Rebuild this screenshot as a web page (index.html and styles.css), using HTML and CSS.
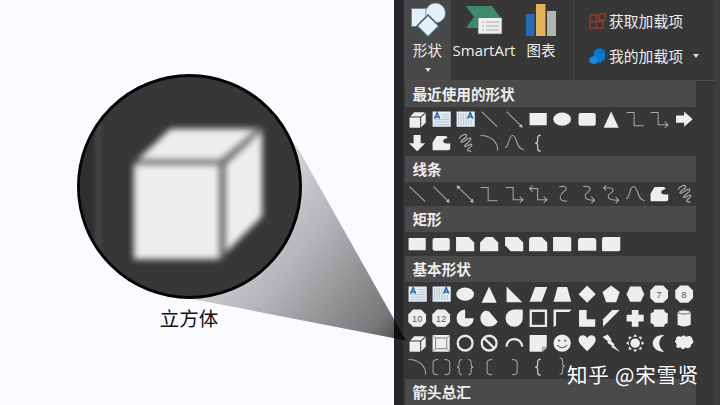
FILE: index.html
```html
<!DOCTYPE html>
<html lang="zh-CN">
<head>
<meta charset="utf-8">
<title>立方体</title>
<link rel="stylesheet" href="styles.css">
</head>
<body>
<svg class="defs" aria-hidden="true">
  <symbol id="cube" viewBox="0 0 24 24"><path class="f" d="M4.500 10.500H15v10H4.500zM5.200 9.500L9 5.300h10.800l-4.300 4.200zM16 10.300l4.500-4.300v9.500L16 20z"/></symbol>
  <symbol id="text-h" viewBox="0 0 24 24"><path fill="#e5edf5" d="M3.500 4.500h18v15h-18z"/><path stroke="#a8b8c8" stroke-width=".8" d="M13 7.500h7M13 10h7M5 12.500h15M5 15h15M5 17.500h15"/><path fill="none" stroke="#286ba8" stroke-width="1.500" d="M5.500 11.500L8 5.500l2.500 6M6.500 9.800h3"/></symbol>
  <symbol id="text-v" viewBox="0 0 24 24"><path fill="#e5edf5" d="M3.500 4.500h18v15h-18z"/><path stroke="#a8b8c8" stroke-width=".8" d="M5.500 6v12M8 6v12M10.500 6v12M13 6v12M15.500 13v5M18 13v5"/><path fill="none" stroke="#286ba8" stroke-width="1.500" d="M14.500 11.500l2.500-6 2.500 6M15.500 9.800h3"/></symbol>
  <symbol id="line" viewBox="0 0 24 24"><path class="s" d="M4.500 4.500l15.500 15"/></symbol>
  <symbol id="arrow" viewBox="0 0 24 24"><path class="s" d="M4.500 4.500l14.500 14.500"/><path class="f dim" d="M20.500 20.500l-4-1 3-3z"/></symbol>
  <symbol id="arrow2" viewBox="0 0 24 24"><path class="s" d="M5 5l14.500 14"/><path class="f dim" d="M20.500 20.500l-4-1 3-3zM3.500 3.500l4 1-3 3z"/></symbol>
  <symbol id="rect" viewBox="0 0 24 24"><path class="f" d="M3.500 6h17v12h-17z"/></symbol>
  <symbol id="rrect" viewBox="0 0 24 24"><rect class="f" x="3.500" y="6" width="17" height="12.500" rx="2"/></symbol>
  <symbol id="oval" viewBox="0 0 24 24"><ellipse class="f" cx="12" cy="12" rx="8.700" ry="6.500"/></symbol>
  <symbol id="tri" viewBox="0 0 24 24"><path class="f" d="M12 4.500l7.500 16h-15z"/></symbol>
  <symbol id="elbow" viewBox="0 0 24 24"><path class="s" d="M3.500 5.500h7.500v13h9.500"/></symbol>
  <symbol id="elbow-a" viewBox="0 0 24 24"><path class="s" d="M3.500 5.500H11V17.500h9M17.500 14.500l3.300 3-3.300 3"/></symbol>
  <symbol id="elbow-2" viewBox="0 0 24 24"><path class="s" d="M4 6.500h7.500v11H20M17.500 14.500l3.300 3-3.300 3M6.500 3.500l-3 3 3 3"/></symbol>
  <symbol id="right" viewBox="0 0 24 24"><path class="f" d="M4 8.500h8V4.500l8.500 7.500-8.500 7.500v-4H4z"/></symbol>
  <symbol id="down" viewBox="0 0 24 24"><path class="f" d="M8.500 4h7v8h4.500L12 20 4 12h4.500z"/></symbol>
  <symbol id="free" viewBox="0 0 24 24"><path class="f" d="M3.500 19V11.500L7.500 5h9.500l1.500 2q-6 1-4 4.500 2 1.500 6.500.500V17q0 2-2 2z"/></symbol>
  <symbol id="scribble" viewBox="0 0 24 24"><path class="s w" d="M6 7.500C8 4 13 2 13.500 4.500S6.500 9 8 11s8-6 9.500-3.500S11 13 11.500 15s6-3.500 7-1.500-5 4-4 5.500 3.500-.5 3 2"/></symbol>
  <symbol id="arc" viewBox="0 0 24 24"><path class="s" d="M3.500 4.500c10 0 17 6 17 15"/></symbol>
  <symbol id="curve" viewBox="0 0 24 24"><path class="s" d="M3 16.500c4 0 3-12 7.500-12S14 18.500 21.500 18.500"/></symbol>
  <symbol id="lbrace" viewBox="0 0 24 24"><path class="s b" d="M14.500 4q-3 0-3 3v3q0 2-2.500 2 2.500 0 2.500 2v3q0 3 3 3"/></symbol>
  <symbol id="rbrace" viewBox="0 0 24 24"><path class="s" d="M9.500 3q3 0 3 3v3q0 2 2.500 2-2.500 0-2.500 2v3q0 3-3 3"/></symbol>
  <symbol id="scurve" viewBox="0 0 24 24"><path class="s" d="M9 5q7-2 7 1.500c0 3-6 4-6 8.500q0 4 7 4"/></symbol>
  <symbol id="scurve-a" viewBox="0 0 24 24"><path class="s" d="M8 4.500q7-1 7 2.500c0 3-5 3-5 7q0 4 9 4M16 14.500l3.500 3.500-3.500 3"/></symbol>
  <symbol id="scurve-2" viewBox="0 0 24 24"><path class="s" d="M5 6q9-1 9 2c0 3-5 3-5 6q0 4 10 4M16.500 15l3 3-3 3M7 3L4.500 6 7 8.500"/></symbol>
  <symbol id="snip1" viewBox="0 0 24 24"><path class="f" d="M3 5h12.500l5.500 5.500V19H3z"/></symbol>
  <symbol id="snip2" viewBox="0 0 24 24"><path class="f" d="M3 10.500L8.500 5h7l5.500 5.500V19H3z"/></symbol>
  <symbol id="snipd" viewBox="0 0 24 24"><path class="f" d="M3 5h12.500l5.500 5.500V19H8.500L3 13z"/></symbol>
  <symbol id="snipr" viewBox="0 0 24 24"><path class="f" d="M3 7.500Q3 5 6 5h9.500l5.500 5.500V19H3z"/></symbol>
  <symbol id="round1" viewBox="0 0 24 24"><path class="f" d="M3 5h16q2 0 2 2v12H3z"/></symbol>
  <symbol id="round2" viewBox="0 0 24 24"><path class="f" d="M3 8.500Q3 6 5.500 6h13Q21 6 21 8.500v10H3z"/></symbol>
  <symbol id="roundd" viewBox="0 0 24 24"><path class="f" d="M3 7q0-2 2-2h16v12q0 2-2 2H3z"/></symbol>
  <symbol id="rtri" viewBox="0 0 24 24"><path class="f" d="M4.500 4.500l15.500 15.500H4.500z"/></symbol>
  <symbol id="para" viewBox="0 0 24 24"><path class="f" d="M9 5h12l-5.500 14.500h-12z"/></symbol>
  <symbol id="trap" viewBox="0 0 24 24"><path class="f" d="M7.500 5h9.500l4 14.500H3.500z"/></symbol>
  <symbol id="diamond" viewBox="0 0 24 24"><path class="f" d="M12 3.500l8.500 8.500-8.500 8.500L3.500 12z"/></symbol>
  <symbol id="penta" viewBox="0 0 24 24"><path class="f" d="M12 3.500l8.500 6.500-3.500 10H7L3.500 10z"/></symbol>
  <symbol id="hexa" viewBox="0 0 24 24"><path class="f" d="M7 4.500h10.500l3.500 7.500-3.500 7.500H7L3.500 12z"/></symbol>
  <symbol id="poly" viewBox="0 0 24 24"><path class="f" d="M8 3.500h8l4.800 4.800v7.500L16 20.500H8l-4.800-4.700V8.300z"/></symbol>
  <symbol id="pie" viewBox="0 0 24 24"><path class="f" d="M12 3.500A8.500 8.500 0 1 0 20.500 12H12z"/></symbol>
  <symbol id="chord" viewBox="0 0 24 24"><path class="f" d="M8 4.500A8.300 8.300 0 0 0 12 20.300q5.500 0 8.500-4.800L12 5.500z"/></symbol>
  <symbol id="tear" viewBox="0 0 24 24"><path class="f" d="M20.500 3.500V12A8.500 8.500 0 1 1 12 3.500z"/></symbol>
  <symbol id="frame" viewBox="0 0 24 24"><path class="o" d="M4.700 4.700h15v15h-15z"/></symbol>
  <symbol id="half" viewBox="0 0 24 24"><path class="f" d="M3.500 3.500h18L19 6H6v13l-2.500 2z"/></symbol>
  <symbol id="lshape" viewBox="0 0 24 24"><path class="f" d="M4 4h7.500v9H20v7.500H4z"/></symbol>
  <symbol id="stripe" viewBox="0 0 24 24"><path class="f" d="M13 4h7.500L4 20.500V13z"/></symbol>
  <symbol id="plus" viewBox="0 0 24 24"><path class="f" d="M8.700 4h6.600v4.700h5.200v6.600h-5.200v5.200H8.700v-5.200H3.500V8.700h5.200z"/></symbol>
  <symbol id="plaque" viewBox="0 0 24 24"><path class="f" d="M7 3.500h10q0 3.500 3.500 3.500v10q-3.500 0-3.500 3.500H7Q7 17 3.500 17V7Q7 7 7 3.500z"/></symbol>
  <symbol id="can" viewBox="0 0 24 24"><path class="f" d="M5.500 6v12.500q6.500 3.500 13 0V6z"/><ellipse cx="12" cy="6" rx="6" ry="2" fill="#eee" stroke="#666"/></symbol>
  <symbol id="bevel" viewBox="0 0 24 24"><path class="f" d="M3.500 4h17v16.500h-17z"/><path fill="none" stroke="#777" stroke-width=".9" d="M6.500 7h11v10.500h-11zM3.500 4l3 3M20.500 4l-3 3M3.500 20.500l3-3M20.500 20.500l-3-3"/></symbol>
  <symbol id="donut" viewBox="0 0 24 24"><circle class="o" cx="12" cy="12" r="7.300"/></symbol>
  <symbol id="no" viewBox="0 0 24 24"><circle class="o" cx="12" cy="12" r="7.300"/><path class="o" d="M7 7l10 10"/></symbol>
  <symbol id="block" viewBox="0 0 24 24"><path class="o" d="M4.500 15.500c.5-10 14.500-10 15.500 0"/></symbol>
  <symbol id="note" viewBox="0 0 24 24"><path class="f" d="M3.500 4h17v12.500l-4 4h-13z"/><path fill="#d8d8d8" stroke="#777" stroke-width=".8" d="M16 20.500l.5-4.500 4 .5z"/></symbol>
  <symbol id="smile" viewBox="0 0 24 24"><circle class="f" cx="12" cy="12" r="8.500"/><path fill="none" stroke="#666" d="M7 14q5 5 10 0"/><circle cx="9" cy="9.500" r="1.200" fill="#777"/><circle cx="15" cy="9.500" r="1.200" fill="#777"/></symbol>
  <symbol id="heart" viewBox="0 0 24 24"><path class="f" d="M12 20C8 16 3.500 12.500 3.500 8.500c0-5 7-6 8.500-1 1.500-5 8.500-4 8.500 1 0 4-4.500 7.500-8.500 11.500z"/></symbol>
  <symbol id="bolt" viewBox="0 0 24 24"><path class="f" d="M3.500 6l5-2.500 4 5-1 .8 4 4-1 .7 6.500 7-9-5.500 1-.8-5-3 1.200-1z"/></symbol>
  <symbol id="sun" viewBox="0 0 24 24"><circle class="f" cx="12" cy="12" r="4.700"/><path class="f" d="M12 3l2 2.700h-4zM12 21l2-2.700h-4zM3 12l2.700-2v4zM21 12l-2.700-2v4zM5.500 5.500l3.400.5L6 8.900zM18.500 5.500l-3.400.5L18 8.900zM5.500 18.500l3.400-.5L6 15.100zM18.500 18.500l-3.400-.5 2.900-2.900z"/></symbol>
  <symbol id="moon" viewBox="0 0 24 24"><path class="f" d="M17 4c-15-1-15 17 0 16.500C10.500 16 10.500 8 17 4z"/></symbol>
  <symbol id="cloud" viewBox="0 0 24 24"><path class="f" d="M4 9c-1-3 3-5 5-3 1-2 4-2 5 0 2-2 6-1 6 2 2 2 1 5-1 5 0 4-4 5-5.500 3-1 2-4 3-5 0C5 18 3 15 5 13c-2-1-3-3-1-4z"/></symbol>
  <symbol id="lbracket" viewBox="0 0 24 24"><path class="s" d="M15 4.500q-5 0-5 3v9q0 3 5 3"/></symbol>
  <symbol id="rbracket" viewBox="0 0 24 24"><path class="s" d="M10 4.500q5 0 5 3v9q0 3-5 3"/></symbol>
  <symbol id="brackets" viewBox="0 0 24 24"><path class="s" d="M9 4.500q-5 0-5 3v9q0 3 5 3M15.500 4.500q5 0 5 3v9q0 3-5 3"/></symbol>
  <symbol id="braces" viewBox="0 0 24 24"><path class="s" d="M9 4.500q-3 0-3 3V10q0 2-2 2 2 0 2 2v2.500q0 3 3 3M15 4.500q3 0 3 3V10q0 2 2 2-2 0-2 2v2.500q0 3-3 3"/></symbol>
</svg>

<main class="stage">
  <section class="callout">
    <div class="lens">
      <svg viewBox="0 0 220 220">
        <path class="lens-edge" d="M-5 0h22v220H-5z" fill="#2f2f31"/>
        <path class="lens-edge" d="M18 44v132" stroke="#484848" stroke-width="5"/>
        <g class="lens-cube">
          <path fill="#eee" d="M54 88h86v95H54zM58 83l33-31h88l-38 31zM146 88l37-34v86l-37 37z"/>
          <path fill="none" stroke="#777" stroke-width="5" d="M55 86h87v97M142 86l40-35"/>
        </g>
      </svg>
    </div>
    <p class="caption">立方体</p>
  </section>

  <section class="app">
    <div class="edge"></div>
    <div class="panel">
      <header class="ribbon">
        <div class="tool shapes">
          <svg width="38" height="40" viewBox="0 0 38 40"><path fill="#e6eff8" stroke="#557b9d" stroke-width=".7" d="M2.500 8.500h19v18h-19z"/><circle cx="26.500" cy="13" r="10" fill="#e6eff8" stroke="#557b9d" stroke-width=".7"/><path fill="#e6eff8" stroke="#3e5970" stroke-width="1.500" d="M19 15L30 26 19 37 8 26z"/></svg>
          <span>形状</span>
          <i class="caret"></i>
        </div>
        <div class="tool smart">
          <svg width="40" height="40" viewBox="0 0 40 40"><path fill="#3e8b6b" d="M2 6h26l8 11-8 11H2l8-11z"/><path fill="#eee" stroke="#555" stroke-width=".7" d="M14 17.500h24v16.500H14z"/><path stroke="#aaa" d="M18 22h2M22 22h13M18 26h2M22 26h13M18 30h2M22 30h13"/></svg>
          <span>SmartArt</span>
        </div>
        <div class="tool chart">
          <svg width="34" height="40" viewBox="0 0 34 40"><path fill="#2869b5" d="M2 14h8.500v22H2z"/><path fill="#e3b25c" d="M12 4h9.500v32H12z"/><path fill="#b1b5ac" d="M23 11h9v25h-9z"/></svg>
          <span>图表</span>
        </div>
        <div class="addins">
          <div class="addin"><svg width="18" height="18" viewBox="0 0 18 18"><path fill="none" stroke="#8f3d2e" stroke-width="1.500" d="M9 3H2v13h13V9M2 9.500h13M8.500 3v13M11 2h6v6h-6z"/></svg><span>获取加载项</span></div>
          <div class="addin"><svg width="18" height="18" viewBox="0 0 18 18"><path fill="#0e77cf" d="M6 3.500L12 1l5 3v8l-5 4-6-3z"/><path fill="#1689e3" d="M1.500 11l4-2 4 2v4.500L6 17.500l-4.500-2z"/><path fill="none" stroke="#0a5ca8" stroke-width=".7" d="M6 3.500l6 2.500 5-2"/></svg><span>我的加载项</span><i class="caret"></i></div>
        </div>
      </header>

      <div class="gallery">
        <h2>最近使用的形状</h2>
        <div class="grid">
          <svg><use href="#cube"/></svg><svg><use href="#text-h"/></svg><svg><use href="#text-v"/></svg><svg><use href="#line"/></svg><svg><use href="#arrow"/></svg><svg><use href="#rect"/></svg><svg><use href="#oval"/></svg><svg><use href="#rrect"/></svg><svg><use href="#tri"/></svg><svg><use href="#elbow"/></svg><svg><use href="#elbow-a"/></svg><svg><use href="#right"/></svg>
          <svg><use href="#down"/></svg><svg><use href="#free"/></svg><svg><use href="#scribble"/></svg><svg><use href="#arc"/></svg><svg><use href="#curve"/></svg><svg><use href="#lbrace"/></svg>
        </div>
        <h2>线条</h2>
        <div class="grid">
          <svg><use href="#line"/></svg><svg><use href="#arrow"/></svg><svg><use href="#arrow2"/></svg><svg><use href="#elbow"/></svg><svg><use href="#elbow-a"/></svg><svg><use href="#elbow-2"/></svg><svg><use href="#scurve"/></svg><svg><use href="#scurve-a"/></svg><svg><use href="#scurve-2"/></svg><svg><use href="#curve"/></svg><svg><use href="#free"/></svg><svg><use href="#scribble"/></svg>
        </div>
        <h2>矩形</h2>
        <div class="grid">
          <svg><use href="#rect"/></svg><svg><use href="#rrect"/></svg><svg><use href="#snip1"/></svg><svg><use href="#snip2"/></svg><svg><use href="#snipd"/></svg><svg><use href="#snipr"/></svg><svg><use href="#round1"/></svg><svg><use href="#round2"/></svg><svg><use href="#roundd"/></svg>
        </div>
        <h2>基本形状</h2>
        <div class="grid">
          <svg><use href="#text-h"/></svg><svg><use href="#text-v"/></svg><svg><use href="#oval"/></svg><svg><use href="#tri"/></svg><svg><use href="#rtri"/></svg><svg><use href="#para"/></svg><svg><use href="#trap"/></svg><svg><use href="#diamond"/></svg><svg><use href="#penta"/></svg><svg><use href="#hexa"/></svg><svg viewBox="0 0 24 24"><use href="#poly"/><text x="12" y="15.500">7</text></svg><svg viewBox="0 0 24 24"><use href="#poly"/><text x="12" y="15.500">8</text></svg>
          <svg viewBox="0 0 24 24"><use href="#poly"/><text x="12" y="15.500">10</text></svg><svg viewBox="0 0 24 24"><use href="#poly"/><text x="12" y="15.500">12</text></svg><svg><use href="#pie"/></svg><svg><use href="#chord"/></svg><svg><use href="#tear"/></svg><svg><use href="#frame"/></svg><svg><use href="#half"/></svg><svg><use href="#lshape"/></svg><svg><use href="#stripe"/></svg><svg><use href="#plus"/></svg><svg><use href="#plaque"/></svg><svg><use href="#can"/></svg>
          <svg><use href="#cube"/></svg><svg><use href="#bevel"/></svg><svg><use href="#donut"/></svg><svg><use href="#no"/></svg><svg><use href="#block"/></svg><svg><use href="#note"/></svg><svg><use href="#smile"/></svg><svg><use href="#heart"/></svg><svg><use href="#bolt"/></svg><svg><use href="#sun"/></svg><svg><use href="#moon"/></svg><svg><use href="#cloud"/></svg>
          <svg><use href="#arc"/></svg><svg><use href="#brackets"/></svg><svg><use href="#braces"/></svg><svg><use href="#lbracket"/></svg><svg><use href="#rbracket"/></svg><svg><use href="#lbrace"/></svg><svg><use href="#rbrace"/></svg>
        </div>
        <h2>箭头总汇</h2>
      </div>
    </div>
  </section>

  <svg class="beam" viewBox="0 0 720 405">
    <defs><linearGradient id="fade" gradientUnits="userSpaceOnUse" x1="230" y1="200" x2="406" y2="341"><stop offset="0" stop-color="#000" stop-opacity=".12"/><stop offset=".4" stop-color="#000" stop-opacity=".28"/><stop offset=".85" stop-color="#000" stop-opacity=".52"/><stop offset="1" stop-color="#000" stop-opacity=".72"/></linearGradient></defs>
    <path fill="url(#fade)" d="M296 145L406 340.500 190 298.500z"/>
  </svg>
  <p class="watermark">知乎 @宋雪贤</p>
</main>
</body>
</html>
```
FILE: styles.css
```css
* { box-sizing: border-box; }

body {
  margin: 0;
  font-family: "Noto Sans CJK SC", sans-serif;
  color: #eee;
}

.defs { position: absolute; width: 0; height: 0; }

.stage {
  position: relative;
  display: flex;
  width: 720px;
  height: 405px;
  overflow: hidden;
  background: #fafaff;
}

.callout {
  width: 393.5px;
  padding: 73.5px 0 0 76.5px;
}

.lens {
  position: relative;
  z-index: 2;
  width: 225px;
  height: 225px;
  border: 3px solid #050507;
  border-radius: 50%;
  overflow: hidden;
  background: #373737;
}

.lens svg { display: block; width: 219px; height: 219px; }
.lens-cube { filter: blur(3px); }
.lens-edge { filter: blur(2px); }

.caption {
  width: 225px;
  margin: 4px 0 0;
  color: #111;
  font-size: 19.5px;
  line-height: 30px;
  text-align: center;
}

.app {
  display: flex;
  flex: 1;
  height: 405px;
  background: #373737;
}

.edge {
  width: 10.5px;
  background: #26272b;
  border-right: 1px solid #303236;
}

.panel {
  flex: 1;
  border-right: 5px solid #3c3c3c;
}

.ribbon {
  display: flex;
  height: 81px;
  border-bottom: 1px solid #4d4d4d;
}

.tool {
  display: flex;
  flex-direction: column;
  align-items: center;
  font-size: 14.5px;
  line-height: 22px;
  white-space: nowrap;
}

.tool svg { display: block; }
.shapes { width: 47px; background: #484848; }
.smart { width: 66px; }
.chart { width: 48px; }
.tool span { margin-top: -1px; }
.smart span { font-family: "Open Sans", sans-serif; font-size: 15px; }

.caret {
  border: 3px solid transparent;
  border-top: 4px solid #ddd;
  border-bottom: 0;
}

.shapes .caret { margin-top: 7px; }

.addins {
  flex: 1;
  margin-left: 8px;
  padding: 9px 0 0 14px;
  border-left: 1px solid #484848;
}

.addin {
  display: flex;
  align-items: center;
  gap: 3px;
  height: 24px;
  margin-bottom: 11px;
  font-size: 14.8px;
  line-height: 24px;
  white-space: nowrap;
}

.addin .caret { margin-left: 7px; }

.gallery { width: 291.5px; padding-left: .5px; }

h2 {
  height: 26px;
  margin: 0;
  padding-left: 8px;
  background: #4a4a4a;
  font-size: 14.6px;
  font-weight: 700;
  line-height: 25px;
}

.grid {
  display: grid;
  grid-template-columns: repeat(12, 24.3px);
  grid-auto-rows: 24.25px;
}

.grid svg { display: block; width: 24.3px; height: 24.25px; }

.grid text {
  fill: #555;
  font: 9px "Liberation Sans", sans-serif;
  text-anchor: middle;
}

.f { fill: #eee; }
.dim { fill: #bbb; }
.s { fill: none; stroke: #a8a8a8; stroke-width: 1; }
.w { stroke-width: 1.2; }
.b { stroke: #ccc; stroke-width: 1.2; }
.o { fill: none; stroke: #e8e8e8; stroke-width: 2.3; }

.beam {
  position: absolute;
  inset: 0;
  z-index: 1;
  width: 720px;
  height: 405px;
}

.watermark {
  position: absolute;
  z-index: 3;
  left: 567px;
  top: 359px;
  margin: 0;
  color: #fff;
  font-size: 20.5px;
  letter-spacing: .8px;
  line-height: 30px;
  white-space: nowrap;
}
```
